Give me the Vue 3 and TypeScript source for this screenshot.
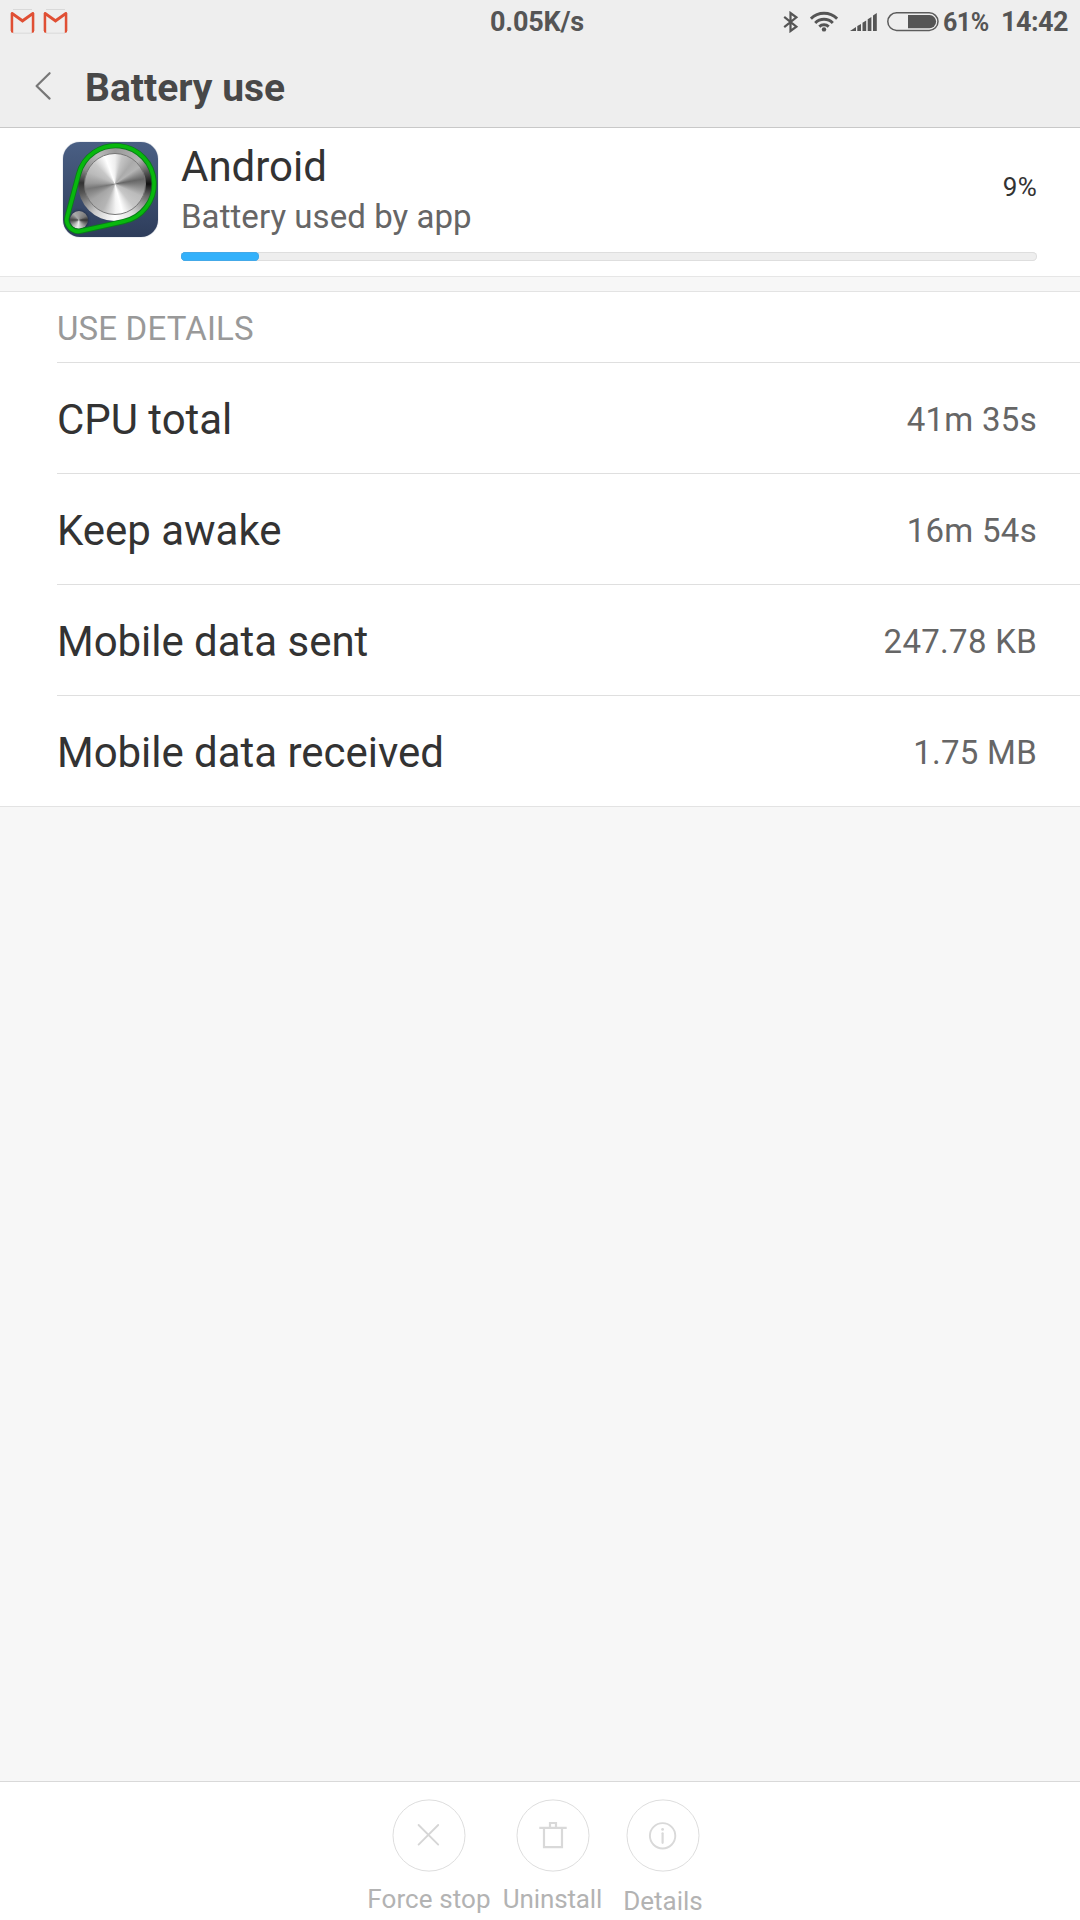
<script setup lang="ts">
interface Detail {
  label: string
  value: string
}

const app = { name: 'Android', summary: 'Battery used by app', percent: 9 }

const details: Detail[] = [
  { label: 'CPU total', value: '41m 35s' },
  { label: 'Keep awake', value: '16m 54s' },
  { label: 'Mobile data sent', value: '247.78 KB' },
  { label: 'Mobile data received', value: '1.75 MB' },
]
</script>

<template>
  <div class="screen">
    <header class="top">
      <div class="status">
        <div class="mails">
          <svg v-for="n in 2" :key="n" width="25" height="25" viewBox="0 0 25 25">
            <path d="M3 0.5H22M3 24.2H22" stroke="#d9d9d9" stroke-width="1" fill="none" />
            <path d="M0.8 4V22M24.2 4V22" stroke="#e3a498" stroke-width="1" fill="none" />
            <path d="M1 3.2L2.6 3L12.5 10L22.4 3L24 3.2V23.2L21.8 24V7L12.5 13.8L3.2 7V24L1 23.2Z" fill="#e04f34" />
          </svg>
        </div>
        <div class="speed">0.05K/s</div>
        <div class="tray">
          <svg class="bt" width="16" height="22" viewBox="0 0 16 22">
            <path d="M1.2 5.8L13.4 15.6L7.5 20V2L13.4 6.4L1.2 16.2" fill="none" stroke="#555" stroke-width="2.2" />
          </svg>
          <svg class="wifi" width="28" height="21" viewBox="0 0 28 21">
            <g fill="none" stroke="#555" stroke-width="2.9">
              <path d="M0.9 7.6A18.6 18.6 0 0 1 27.1 7.6" />
              <path d="M5.2 11.9A12.4 12.4 0 0 1 22.8 11.9" />
              <path d="M9.3 15.6A6.9 6.9 0 0 1 18.7 15.6" />
            </g>
            <circle cx="14" cy="18.4" r="2.2" fill="#555" />
          </svg>
          <svg class="signal" width="27" height="18" viewBox="0 0 27 18">
            <path d="M0 18L6 14V18ZM7.3 13L11 11V18H7.3ZM12.5 9.8L16.2 7.5V18H12.5ZM17.7 6.3L21.4 4V18H17.7ZM23 2.5L26.8 0V18H23Z" fill="#555" />
          </svg>
          <svg class="battery" width="52" height="20" viewBox="0 0 52 20">
            <rect x="0.8" y="0.8" width="50.2" height="17.6" rx="8.8" fill="none" stroke="#5c5c5c" stroke-width="1.5" />
            <path d="M21 3H42.5A6.4 6.4 0 0 1 42.5 16.2H21Z" fill="#555" />
          </svg>
          <span class="level">61%</span>
          <span class="clock">14:42</span>
        </div>
      </div>
      <div class="titlebar">
        <svg class="back" width="18" height="30" viewBox="0 0 18 30">
          <path d="M15.6 2.2L2.6 15L15.6 27.6" fill="none" stroke="#777" stroke-width="2.2" stroke-linecap="round" stroke-linejoin="round" />
        </svg>
        <h1>Battery use</h1>
      </div>
    </header>

    <section class="summary">
      <div class="app-icon">
        <div class="rim"></div>
        <div class="disc"></div>
        <div class="pulley"></div>
        <svg class="belt" width="95" height="95" viewBox="0 0 95 95">
          <path d="M60.5 79.6A38.4 38.4 0 1 0 15.6 32.1L4.2 74.8A11.5 11.5 0 0 0 17.8 89Z" fill="none" stroke="#0a7d1a" stroke-width="5.4" />
          <path d="M60.5 79.6A38.4 38.4 0 1 0 15.6 32.1L4.2 74.8A11.5 11.5 0 0 0 17.8 89Z" fill="none" stroke="#08b80e" stroke-width="3.6" />
        </svg>
      </div>
      <div class="usage">
        <div class="usage-row">
          <div>
            <div class="name">{{ app.name }}</div>
            <div class="desc">{{ app.summary }}</div>
          </div>
          <div class="percent">{{ app.percent }}%</div>
        </div>
        <div class="bar"><div class="fill" :style="{ width: app.percent + '%' }"></div></div>
      </div>
    </section>

    <section class="details">
      <h2>USE DETAILS</h2>
      <div v-for="d in details" :key="d.label" class="row">
        <span class="label">{{ d.label }}</span>
        <span class="value">{{ d.value }}</span>
      </div>
    </section>

    <footer class="actions">
      <div class="action stop">
        <svg width="74" height="74" viewBox="0 0 74 74" fill="none">
          <ellipse cx="37" cy="36.5" rx="36" ry="35.6" stroke="#dedede" />
          <path d="M26.6 26L46.2 45.6M46.2 26L26.6 45.6" stroke="#d6d6d6" stroke-width="1.9" stroke-linecap="round" />
        </svg>
        <span>Force stop</span>
      </div>
      <div class="action uninstall">
        <svg width="74" height="74" viewBox="0 0 74 74" fill="none">
          <ellipse cx="37" cy="36.5" rx="36" ry="35.6" stroke="#dedede" />
          <path d="M23.3 28.8H50.7M34 28.5V24H40V28.5M28 29V48.2H46V29" stroke="#d9d9d9" stroke-width="2.2" />
        </svg>
        <span>Uninstall</span>
      </div>
      <div class="action info">
        <svg width="74" height="74" viewBox="0 0 74 74" fill="none">
          <ellipse cx="37" cy="36.5" rx="36" ry="35.6" stroke="#dedede" />
          <circle cx="36.6" cy="36.8" r="12.7" stroke="#d9d9d9" stroke-width="1.9" />
          <circle cx="36.6" cy="30.4" r="1.4" fill="#d9d9d9" />
          <path d="M36.6 34.3V43.8" stroke="#d9d9d9" stroke-width="2.2" stroke-linecap="round" />
        </svg>
        <span>Details</span>
      </div>
    </footer>
  </div>
</template>

<style>
body {
  margin: 0;
}
</style>

<style scoped>
.screen {
  width: 1080px;
  height: 1920px;
  display: flex;
  flex-direction: column;
  background: #f7f7f7;
  font-family: Roboto, sans-serif;
  overflow: hidden;
}
.top {
  box-sizing: border-box;
  height: 128px;
  background: #eee;
  border-bottom: 1px solid #c8c8c8;
}
.status {
  height: 44px;
  display: grid;
  grid-template-columns: 490px 1fr 297px;
  color: #555;
  font-weight: 700;
}
.mails {
  display: flex;
  gap: 8px;
  padding: 9px 0 0 10px;
}
.speed {
  font-size: 27px;
  line-height: 44px;
  letter-spacing: -0.2px;
}
.tray {
  display: flex;
  align-items: flex-start;
}
.bt {
  margin: 11px 11px 0 0;
}
.wifi {
  margin: 11px 12px 0 0;
}
.signal {
  margin: 13px 10px 0 0;
}
.battery {
  margin: 12px 4px 0 0;
}
.level {
  width: 58px;
  font-size: 25px;
  line-height: 45px;
  letter-spacing: -0.5px;
}
.clock {
  font-size: 27px;
  line-height: 44px;
  letter-spacing: -0.5px;
}
.titlebar {
  display: flex;
  height: 83px;
}
.back {
  margin: 27px 33px 0 34px;
}
h1 {
  margin: 0;
  font-size: 39px;
  line-height: 88px;
  font-weight: 700;
  color: #484848;
}
.summary {
  box-sizing: border-box;
  height: 149px;
  display: flex;
  background: #fff;
  border-bottom: 1px solid #e6e6e6;
  padding: 14px 43px 0 63px;
}
.app-icon {
  position: relative;
  width: 95px;
  height: 95px;
  border-radius: 17px;
  background: linear-gradient(#4a5f84, #2e3d5b);
  box-shadow: 0 0 1px #66748c;
  overflow: hidden;
  margin-right: 23px;
}
.rim,
.disc,
.pulley,
.belt {
  position: absolute;
  border-radius: 50%;
}
.belt {
  left: 0;
  top: 0;
  border-radius: 0;
}
.rim {
  left: 15.3px;
  top: 5px;
  width: 74px;
  height: 74px;
  background: conic-gradient(#999, #b5b5b5 45deg, #555 70deg, #111 90deg, #666 110deg, #ddd 150deg, #fff 180deg, #ccc 215deg, #555 255deg, #333 272deg, #888 295deg, #bbb 330deg, #999);
}
.disc {
  left: 21.3px;
  top: 11px;
  width: 60px;
  height: 60px;
  border: 1px solid #777;
  background: conic-gradient(#eee, #c4c4c4 15deg, #aaa 38deg, #b4b4b4 55deg, #666 80deg, #777 88deg, #bbb 115deg, #c8c8c8 140deg, #fff 165deg, #f4f4f4 178deg, #b5b5b5 205deg, #a5a5a5 235deg, #777 260deg, #999 272deg, #bbb 295deg, #c8c8c8 315deg, #fff 340deg, #eee);
}
.pulley {
  left: 6.5px;
  top: 69px;
  width: 18px;
  height: 18px;
  background: conic-gradient(#999, #777 60deg, #333 90deg, #999 140deg, #eee 190deg, #aaa 230deg, #444 270deg, #aaa 320deg, #999);
  box-shadow: 0 0 3px #1a2233;
}
.usage {
  width: 856px;
}
.usage-row {
  display: flex;
  justify-content: space-between;
  height: 110px;
}
.name {
  font-size: 42px;
  line-height: 50px;
  color: #333;
}
.desc {
  font-size: 33px;
  line-height: 50px;
  letter-spacing: 0.06px;
  color: #666;
}
.percent {
  font-size: 26px;
  line-height: 91px;
  letter-spacing: 0.3px;
  color: #333;
}
.bar {
  box-sizing: border-box;
  height: 9px;
  border-radius: 5px;
  background: #eee;
  box-shadow: inset 0 0 0 1px #dedede;
}
.fill {
  height: 9px;
  min-width: 78px;
  border-radius: 5px;
  background: #33b1fb;
  box-shadow: inset 0 0 0 1px #44a9e8;
}
.details {
  margin-top: 14px;
  background: #fff;
  border-top: 1px solid #e3e3e3;
  border-bottom: 1px solid #e3e3e3;
  padding-left: 57px;
}
h2 {
  margin: 0;
  height: 70px;
  font-size: 33px;
  line-height: 74px;
  letter-spacing: 0.17px;
  font-weight: 400;
  color: #999;
}
.row {
  display: flex;
  justify-content: space-between;
  height: 110px;
  border-top: 1px solid #dfdfdf;
  padding-right: 43px;
  line-height: 113px;
}
.label {
  font-size: 42px;
  letter-spacing: -0.03px;
  color: #333;
}
.value {
  font-size: 33px;
  letter-spacing: 0.28px;
  color: #666;
}
.actions {
  box-sizing: border-box;
  height: 139px;
  margin-top: auto;
  display: flex;
  background: #fff;
  border-top: 1px solid #d9d9d9;
  padding: 17px 0 0 367px;
}
.action {
  display: flex;
  flex-direction: column;
  align-items: center;
  font-size: 26px;
  line-height: 36px;
  color: #b3b3b3;
  white-space: nowrap;
}
.action span {
  margin-top: 8px;
}
.stop {
  width: 124px;
  letter-spacing: 0.1px;
}
.uninstall {
  width: 101px;
  margin-left: 11px;
  letter-spacing: -0.15px;
}
.info {
  width: 80px;
  margin-left: 20px;
}
.info span {
  margin-top: 10px;
}
</style>
